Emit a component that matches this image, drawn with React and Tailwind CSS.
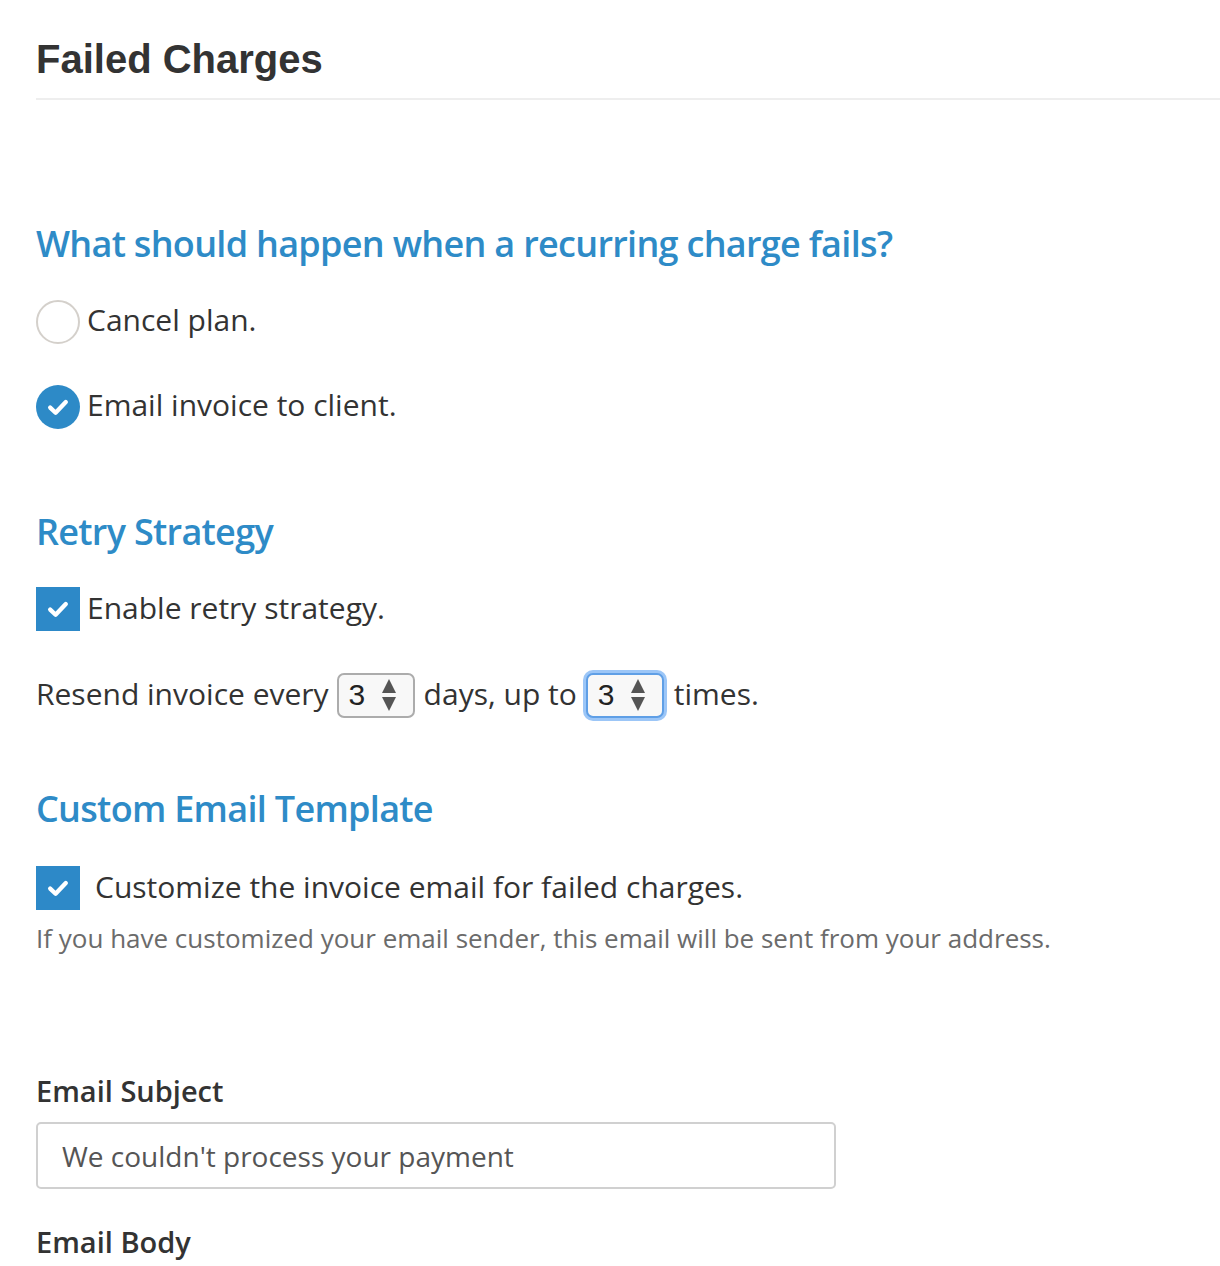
import React from 'react';

const body = { fontFamily: '"Open Sans", "Noto Sans", sans-serif' };

function Check({ className = 'w-5 h-5' }) {
  return (
    <svg viewBox="0 0 20 20" className={className} fill="none">
      <polyline points="3.5,10.5 8,14.8 16.5,5.8" stroke="white" strokeWidth="3.6" strokeLinecap="round" strokeLinejoin="round" />
    </svg>
  );
}

function Radio({ checked }) {
  if (checked) {
    return (
      <span className="w-[44px] h-[44px] rounded-full bg-[#2d8ac7] flex items-center justify-center shrink-0">
        <Check className="w-[24px] h-[24px]" />
      </span>
    );
  }
  return <span className="w-[44px] h-[44px] rounded-full border-2 border-[#d4d0cb] bg-white shrink-0" />;
}

function CheckBox() {
  return (
    <span className="w-[44px] h-[44px] bg-[#2d89c8] flex items-center justify-center shrink-0">
      <Check className="w-[24px] h-[24px]" />
    </span>
  );
}

function Spinner({ focused }) {
  return (
    <span
      className={`inline-flex items-center justify-between w-[78px] h-[45px] rounded-[7px] bg-[#f8f8f8] pl-[10px] pr-[16px] ${
        focused
          ? 'border-2 border-[#5f9fe6] ring-[3px] ring-[#9cc6f7]'
          : 'border-2 border-[#acacac]'
      }`}
    >
      <span className="text-[30px] leading-none text-[#222]" style={{ fontFamily: '"Liberation Sans", Arial, sans-serif' }}>3</span>
      <svg viewBox="0 0 16 34" className="w-[16px] h-[34px]">
        <polygon points="8,1 15,15 1,15" fill="#555" />
        <polygon points="1,19 15,19 8,33" fill="#555" />
      </svg>
    </span>
  );
}

function SectionTitle({ children, className = '' }) {
  return (
    <h2 className={`text-[36px] leading-[48px] font-semibold text-[#2e8bc7] tracking-[-0.7px] ${className}`}>{children}</h2>
  );
}

export default function App() {
  return (
    <div className="min-h-screen bg-white pl-[36px] text-[#333]" style={body}>
      <h1
        className="pt-[37px] pb-[17px] text-[40px] leading-[44px] font-bold text-[#333] border-b-2 border-[#eeeeee]"
        style={{ fontFamily: '"Liberation Sans", Arial, sans-serif' }}
      >
        Failed Charges
      </h1>

      <SectionTitle className="mt-[120px]">What should happen when a recurring charge fails?</SectionTitle>

      <label className="mt-[32px] flex items-center gap-[7px] h-[44px] text-[30px]">
        <Radio />
        <span className="pb-[5px]">Cancel plan.</span>
      </label>
      <label className="mt-[41px] flex items-center gap-[7px] h-[44px] text-[30px]">
        <Radio checked />
        <span className="pb-[5px]">Email invoice to client.</span>
      </label>

      <SectionTitle className="mt-[79px]">Retry Strategy</SectionTitle>

      <label className="mt-[31px] flex items-center gap-[7px] h-[44px] text-[30px]">
        <CheckBox />
        <span className="pb-[4px]">Enable retry strategy.</span>
      </label>

      <div className="mt-[41px] flex items-center h-[46px] text-[30px]">
        <span className="pb-[3px]">Resend invoice every</span>
        <span className="ml-[8px] mr-[9px] flex"><Spinner /></span>
        <span className="pb-[3px]">days, up to</span>
        <span className="ml-[9px] mr-[10px] flex"><Spinner focused /></span>
        <span className="pb-[3px]">times.</span>
      </div>

      <SectionTitle className="mt-[67px]">Custom Email Template</SectionTitle>

      <label className="mt-[33px] flex items-center gap-[15px] h-[44px] text-[30px]">
        <CheckBox />
        <span className="pb-[4px]">Customize the invoice email for failed charges.</span>
      </label>
      <p className="mt-[10px] text-[26px] leading-[36px] text-[#6b6b6b]">
        If you have customized your email sender, this email will be sent from your address.
      </p>

      <div className="mt-[115px] text-[29px] leading-[40px] font-semibold text-[#333]">Email Subject</div>
      <div className="mt-[11px] w-[800px] h-[67px] border-2 border-[#d0d0d0] rounded-[5px] flex items-center pl-[24px] text-[28px] text-[#555]">
        We couldn't process your payment
      </div>
      <div className="mt-[33px] text-[29px] leading-[40px] font-semibold text-[#333]">Email Body</div>
    </div>
  );
}
